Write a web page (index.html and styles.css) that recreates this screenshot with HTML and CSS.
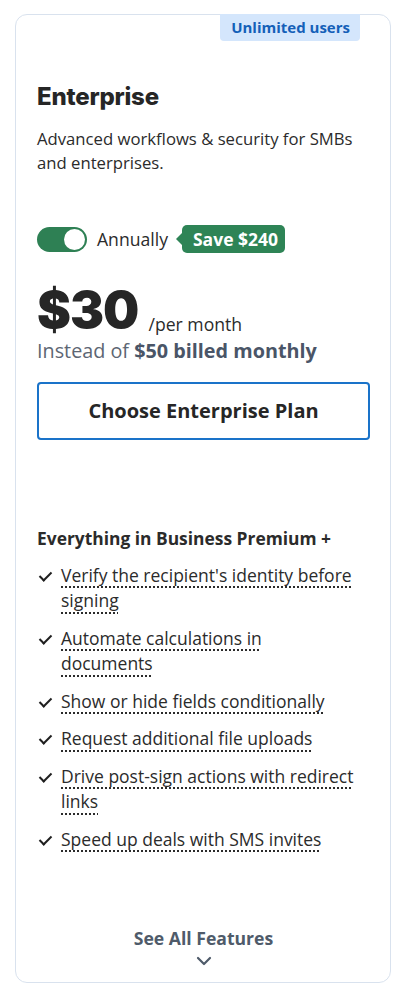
FILE: index.html
```html
<!DOCTYPE html>
<html lang="en">
<head>
  <meta charset="UTF-8">
  <meta name="viewport" content="width=device-width, initial-scale=1.0">
  <title>Enterprise Plan</title>
  <link rel="stylesheet" href="styles.css">
</head>
<body>

  <div class="plan-card">
    <span class="plan-badge">Unlimited users</span>

    <h2 class="plan-name">Enterprise</h2>
    <p class="plan-desc">Advanced workflows &amp; security for SMBs and enterprises.</p>

    <div class="billing-row">
      <span class="toggle"><span class="toggle-knob"></span></span>
      <span class="billing-label">Annually</span>
      <span class="save-tag">Save $240</span>
    </div>

    <div class="price-row">
      <span class="price">$30</span>
      <span class="per">/per month</span>
    </div>
    <p class="price-note">Instead of <b>$50 billed monthly</b></p>

    <button type="button" class="choose-btn">Choose Enterprise Plan</button>

    <h4 class="features-title">Everything in Business Premium +</h4>
    <ul class="features">
      <li><span>Verify the recipient's identity before signing</span></li>
      <li><span>Automate calculations in documents</span></li>
      <li><span>Show or hide fields conditionally</span></li>
      <li><span>Request additional file uploads</span></li>
      <li><span>Drive post-sign actions with redirect links</span></li>
      <li><span>Speed up deals with SMS invites</span></li>
    </ul>

    <a class="see-all" href="#">
      See All Features
      <svg width="16" height="10" viewBox="0 0 16 10"><path d="M2 2l6 6 6-6" fill="none" stroke="#4f5b6a" stroke-width="2.2" stroke-linecap="round" stroke-linejoin="round"/></svg>
    </a>
  </div>

</body>
</html>
```

FILE: styles.css
```css
/* Pricing card */
body {
  font-family: "Open Sans", Arial, sans-serif;
  background-color: #ffffff;
  color: #2b2b2b;
  margin: 0;
  padding: 14px 16px 0 15px;
}

.plan-card {
  position: relative;
  box-sizing: border-box;
  height: 969px;
  border: 1px solid #d9e2ee;
  border-radius: 12px;
  padding: 67px 20px 0 21px;
  display: flex;
  flex-direction: column;
}

.plan-badge {
  position: absolute;
  top: -1px;
  right: 30px;
  background-color: #d4e6fc;
  color: #1460b8;
  font-size: 15px;
  font-weight: 700;
  line-height: 27px;
  padding: 0 10px 0 11px;
  border-radius: 0 0 4px 4px;
}

.plan-name {
  font-family: Inter, "Liberation Sans", sans-serif;
  font-size: 24px;
  font-weight: 800;
  letter-spacing: -0.2px;
  line-height: 30px;
  margin: 0;
  color: #262626;
}

.plan-desc {
  font-size: 16.7px;
  line-height: 24px;
  margin: 15px 0 0;
}

.billing-row {
  display: flex;
  align-items: center;
  margin-top: 50px;
}

.toggle {
  width: 50px;
  height: 25px;
  border-radius: 13px;
  background-color: #2e8054;
  display: flex;
  align-items: center;
  justify-content: flex-end;
  padding: 0 2px;
  box-sizing: border-box;
}

.toggle-knob {
  width: 21px;
  height: 21px;
  border-radius: 50%;
  background-color: #ffffff;
}

.billing-label {
  font-size: 17.6px;
  margin-left: 10px;
}

.save-tag {
  position: relative;
  margin-left: 14px;
  background-color: #2e8456;
  color: #ffffff;
  font-size: 17.5px;
  font-weight: 700;
  line-height: 28px;
  padding: 0 7px 0 11px;
  border-radius: 5px;
}

.save-tag::before {
  content: "";
  position: absolute;
  left: -6px;
  top: 8px;
  border-style: solid;
  border-width: 6px 6px 6px 0;
  border-color: transparent #2e8456 transparent transparent;
}

.price-row {
  margin-top: 34px;
  line-height: 1;
}

.price {
  display: inline-block;
  font-family: Inter, "Liberation Sans", sans-serif;
  font-size: 51px;
  font-weight: 900;
  letter-spacing: -1px;
  line-height: 46px;
  color: #262626;
}

.per {
  font-size: 17.6px;
  line-height: 1;
  margin-left: 6px;
  vertical-align: -3px;
}

.price-note {
  font-size: 19.8px;
  line-height: 26px;
  color: #5d6673;
  margin: 4px 0 0;
}

.price-note b {
  color: #4a5567;
}

.choose-btn {
  margin-top: 18px;
  height: 58px;
  width: 100%;
  background-color: #ffffff;
  border: 2px solid #1a73c9;
  border-radius: 4px;
  font-family: "Open Sans", Arial, sans-serif;
  font-size: 20px;
  font-weight: 700;
  color: #262626;
  cursor: pointer;
}

.features-title {
  font-size: 17.4px;
  font-weight: 700;
  line-height: 26px;
  margin: 85px 0 0;
}

.features {
  list-style: none;
  margin: 12px 0 0;
  padding: 0 15px 0 0;
}

.features li {
  position: relative;
  padding-left: 24px;
  font-size: 17.5px;
  line-height: 25.5px;
  margin-bottom: 12px;
}

.features li::before {
  content: "";
  position: absolute;
  left: 5px;
  top: 6px;
  width: 5px;
  height: 10px;
  border: solid #1f1f1f;
  border-width: 0 2.6px 2.6px 0;
  transform: rotate(45deg);
}

.features span {
  text-decoration: underline dotted #2b2b2b;
  text-decoration-thickness: 2px;
  text-underline-offset: 5px;
}

.see-all {
  margin-top: auto;
  margin-bottom: 16px;
  display: flex;
  flex-direction: column;
  align-items: center;
  gap: 6px;
  font-size: 17.6px;
  font-weight: 700;
  color: #4f5b6a;
  text-decoration: none;
}
```
